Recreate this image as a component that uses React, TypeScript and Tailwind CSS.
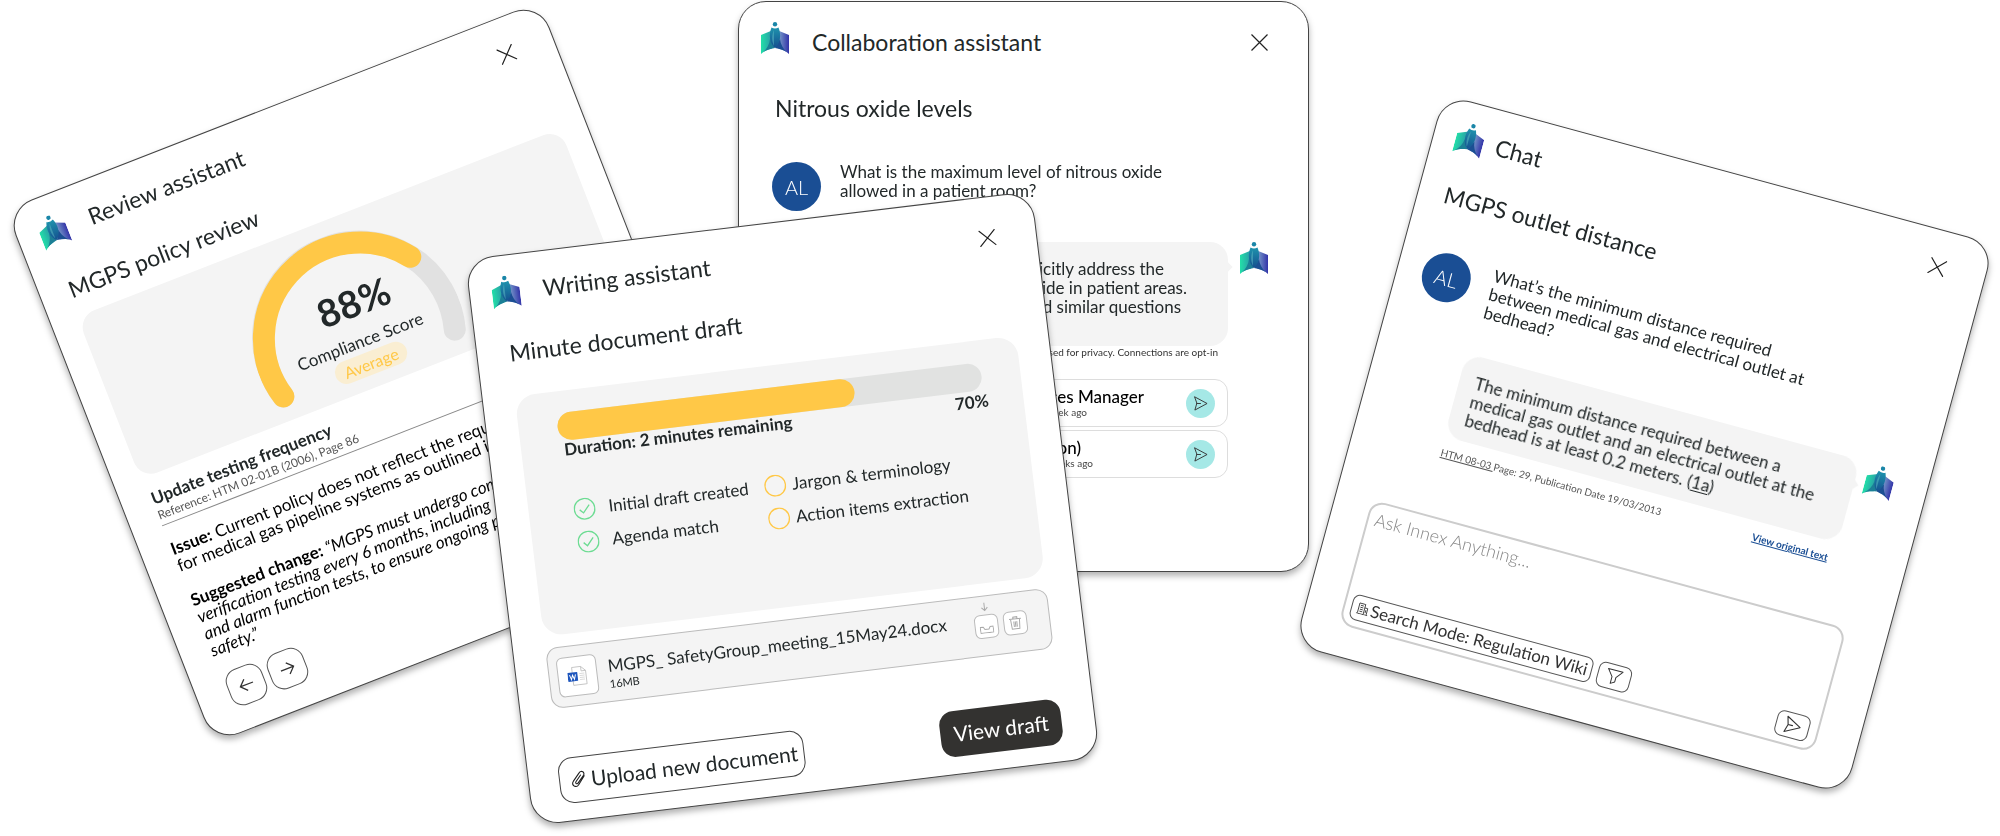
import type { ReactNode } from "react";

const steps = [
  { label: "Initial draft created", done: true },
  { label: "Jargon & terminology", done: false },
  { label: "Agenda match", done: true },
  { label: "Action items extraction", done: false },
];

const contacts = [
  {
    name: "Medical Gas Services Manager",
    seen: "Active 1 week ago",
    nameClass: "pr-[42px]",
    seenClass: "pr-[99px]",
  },
  {
    name: "Estates Lead (London)",
    seen: "Active 2 weeks ago",
    nameClass: "pr-[105px]",
    seenClass: "pr-[93px]",
  },
];

function Logo() {
  return (
    <svg viewBox="0 0 28 32" className="h-8 w-7 shrink-0" aria-hidden="true">
      <defs>
        <linearGradient id="wingLeft" x1="0" y1="0" x2="1" y2="0">
          <stop offset="0" stopColor="#22e0a8" />
          <stop offset="1" stopColor="#2a9aa6" />
        </linearGradient>
        <linearGradient id="wingRight" x1="0" y1="0" x2="1" y2="0">
          <stop offset="0" stopColor="#7da3cc" />
          <stop offset="1" stopColor="#3233a8" />
        </linearGradient>
        <linearGradient id="body" x1="0" y1="0" x2="0" y2="1">
          <stop offset="0" stopColor="#1f93ad" />
          <stop offset="1" stopColor="#14508f" />
        </linearGradient>
      </defs>
      <path d="M0 13L11 8.500V26.500C7 27.500 3 29 0 32Z" fill="url(#wingLeft)" />
      <path d="M28 13L17 8.500V26.500C21 27.500 25 29 28 32Z" fill="url(#wingRight)" />
      <path d="M9 17C8.500 22 6 27 2 30.300C5 28 9 27 14 26Z" fill="#1c7f96" />
      <path d="M19 17C19.500 22 22 27 26 30.300C23 28 19 27 14 26Z" fill="#1b4f93" />
      <path d="M10.500 5.500Q14 7.500 17.500 5.500C20.500 13 19.500 21 14 26C8.500 21 7.500 13 10.500 5.500Z" fill="url(#body)" />
      <path d="M13 8C10.500 13 10.500 19 13 24Z" fill="#5fbcc4" opacity="0.5" />
      <circle cx="14" cy="2.200" r="2.200" fill="#1a86a8" />
    </svg>
  );
}

function SendIcon({ className }: { className: string }) {
  return (
    <svg viewBox="0 0 16 16" className={className} fill="none" stroke="#333" strokeWidth="1" strokeLinejoin="round" strokeLinecap="round" aria-hidden="true">
      <path d="M2 1L15 8L2 15L4 8ZM4 8H8" />
    </svg>
  );
}

type CardProps = {
  title: string;
  heading: string;
  place: string;
  tilt: string;
  titleClass: string;
  closeClass: string;
  headingClass: string;
  children: ReactNode;
};

function Card({ title, heading, place, tilt, titleClass, closeClass, headingClass, children }: CardProps) {
  return (
    <div className={`absolute drop-shadow-[0_4px_3px_rgba(0,0,0,0.3)] ${place}`}>
      <section className={`flex min-h-[571px] w-[571px] flex-col rounded-[28px] border border-[#444] bg-white ${tilt}`}>
        <header className="flex h-[72px] shrink-0 items-center pr-10 pl-[22px]">
          <Logo />
          <h2 className={`text-[23px] leading-7 ${titleClass}`}>{title}</h2>
          <button aria-label="Close" className={`ml-auto ${closeClass}`}>
            <svg viewBox="0 0 17 17" className="size-[17px]" stroke="#222" strokeWidth="1.2">
              <path d="M0.500 0.500L16.500 16.500M16.500 0.500L0.500 16.500" />
            </svg>
          </button>
        </header>
        <h3 className={`text-[23px] leading-7 ${headingClass}`}>{heading}</h3>
        {children}
      </section>
    </div>
  );
}

function Avatar() {
  return (
    <div className="flex size-[49px] shrink-0 items-center justify-center rounded-full bg-[#1a4e94] text-xl font-light text-white">
      AL
    </div>
  );
}

function Bubble({ className, children }: { className: string; children: ReactNode }) {
  return (
    <div className={`relative rounded-[18px] bg-[#f4f4f4] ${className}`}>
      {children}
      <span className="absolute top-[21px] -right-[3px] size-2 rotate-45 bg-[#f4f4f4]" />
    </div>
  );
}

function ReviewCard() {
  return (
    <Card
      title="Review assistant"
      heading="MGPS policy review"
      place="left-[4.5%] top-[86px]"
      tilt="min-w-[573px] min-h-[573px] -rotate-[21.3deg]"
      titleClass="ml-6"
      closeClass="mt-0"
      headingClass="mt-[11px] ml-[29px]"
    >
      <div className="mt-[14px] mr-[26px] ml-[27px] flex h-[174px] justify-center rounded-[18px] bg-[#f4f4f4] pt-[15px] pr-[9px]">
        <div className="relative flex h-[149px] w-[214px] flex-col items-center pt-[52px]">
          <svg viewBox="-107 -107 214 149" className="absolute inset-0" fill="none" strokeWidth="22" strokeLinecap="round" aria-hidden="true">
            <path d="M-92 27A96 96 0 1 1 92 27" stroke="#e1e1e1" />
            <path d="M-92 27A96 96 0 0 1 77 -57" stroke="#ffc847" />
          </svg>
          <strong className="relative ml-4 text-[38px] leading-[38px] font-bold">88%</strong>
          <span className="relative mt-[9px] text-[17px] leading-6 whitespace-nowrap">Compliance Score</span>
          <span className="relative ml-[5px] rounded-full bg-[#faeed2] px-[10px] text-base leading-[23px] text-[#ffc847]">Average</span>
        </div>
      </div>
      <div className="mx-[30px] mt-[13px] border-b border-[#888] pb-[2px]">
        <h4 className="text-[17px] leading-5 font-bold">Update testing frequency</h4>
        <p className="text-[12px] leading-4 text-[#555]">Reference: HTM 02-01B (2006), Page 86</p>
      </div>
      <div className="mx-[30px] mt-4 text-[17px] leading-[18px] whitespace-nowrap text-black">
        <p>
          <b>Issue:</b> Current policy does not reflect the requirements
          <br />
          for medical gas pipeline systems as outlined in HTM.
        </p>
        <p className="mt-[19px] italic">
          <b className="not-italic">Suggested change:</b> “MGPS must undergo complete
          <br />
          verification testing every 6 months, including pressure
          <br />
          and alarm function tests, to ensure ongoing patient
          <br />
          safety.”
        </p>
      </div>
      <div className="mt-4 ml-8 flex gap-[6px]">
        <button aria-label="Previous" className="flex size-[38px] items-center justify-center rounded-[13px] border border-[#555]">
          <svg viewBox="0 0 16 16" className="size-4" fill="none" stroke="#333" strokeWidth="1.300">
            <path d="M15 8H2M7.500 2L1.500 8L7.500 14" />
          </svg>
        </button>
        <button aria-label="Next" className="flex size-[38px] items-center justify-center rounded-[13px] border border-[#555]">
          <svg viewBox="0 0 16 16" className="size-4" fill="none" stroke="#333" strokeWidth="1.300">
            <path d="M1 8H14M8.500 2L14.500 8L8.500 14" />
          </svg>
        </button>
      </div>
    </Card>
  );
}

function CollaborationCard() {
  return (
    <Card
      title="Collaboration assistant"
      heading="Nitrous oxide levels"
      place="left-[36.9%] top-px"
      tilt="rotate-0"
      titleClass="ml-[23px] pt-2"
      closeClass="mt-2"
      headingClass="mt-5 ml-9"
    >
      <div className="mt-10 ml-[33px] flex gap-[19px]">
        <Avatar />
        <p className="text-[17px] leading-[19px]">
          What is the maximum level of nitrous oxide
          <br />
          allowed in a patient room?
        </p>
      </div>
      <div className="mt-[31px] mr-10 ml-[88px] flex gap-3">
        <Bubble className="h-[104px] flex-1 pt-[17px]">
          <p className="text-right text-[17px] leading-[19px]">
            <span className="block pr-16">HTM 03-01 does not explicitly address the</span>
            <span className="block pr-[41px]">maximum level of nitrous oxide in patient areas.</span>
            <span className="block pr-[47px]">Other hospitals had similar questions</span>
          </p>
        </Bubble>
        <Logo />
      </div>
      <p className="mr-[90px] text-right text-[10px] leading-3 text-[#333]">
        Names are anonymised for privacy. Connections are opt-in
      </p>
      <ul className="mt-[21px] mr-20 ml-[88px] flex flex-col gap-[3px]">
        {contacts.map((c) => (
          <li key={c.name} className="flex h-12 items-center rounded-[13px] border border-[#ddd] pr-3">
            <div className="flex flex-1 flex-col items-end">
              <span className={`text-[17px] leading-[18px] font-medium text-black ${c.nameClass}`}>{c.name}</span>
              <span className={`text-[10px] leading-3 text-[#444] ${c.seenClass}`}>{c.seen}</span>
            </div>
            <button aria-label={`Message ${c.name}`} className="flex size-[29px] items-center justify-center rounded-full bg-[#a5e8e6]">
              <SendIcon className="size-[15px]" />
            </button>
          </li>
        ))}
      </ul>
    </Card>
  );
}

function WritingCard() {
  return (
    <Card
      title="Writing assistant"
      heading="Minute document draft"
      place="left-[24.85%] top-[223px]"
      tilt="-rotate-[6.9deg]"
      titleClass="ml-[23px]"
      closeClass="mt-2"
      headingClass="mt-[11px] ml-8"
    >
      <div className="mx-8 mt-[30px] h-[242px] rounded-[20px] bg-[#f4f4f4] px-[39px] pt-[22px]">
        <div className="h-7 rounded-full bg-[#e1e2e1]">
          <div className="h-full w-[70%] rounded-full bg-[#ffc847]" />
        </div>
        <div className="-mr-1 flex justify-between pl-1 text-[17px] font-bold">
          <span className="leading-[18px]">Duration: 2 minutes remaining</span>
          <span className="leading-[22px]">70%</span>
        </div>
        <ul className="mt-[31px] ml-[6px] grid grid-cols-[192px_auto] text-[17px] leading-[33px] whitespace-nowrap">
          {steps.map((s) => (
            <li key={s.label} className={s.done ? "flex items-center gap-[13px]" : "flex items-center gap-[6px]"}>
              <svg viewBox="0 0 22 22" className="size-[22px]" fill="none" stroke={s.done ? "#6ddc93" : "#ffc847"} strokeWidth="1.300">
                <circle cx="11" cy="11" r="10.300" />
                {s.done && <path d="M6 11.500L9.500 15L16 7.500" />}
              </svg>
              {s.label}
            </li>
          ))}
        </ul>
      </div>
      <div className="mx-8 mt-3 flex h-[61px] items-center rounded-[12px] border border-[#bbb] bg-[#f4f4f4] pr-[22px] pl-2">
        <div className="flex size-10 items-center justify-center rounded-[6px] border border-[#bbb] bg-white">
          <svg viewBox="0 0 20 20" className="size-5" aria-hidden="true">
            <path d="M5 1H14L18.500 5.500V19H5ZM14 1V5.500H18.500" fill="#fff" stroke="#bbb" strokeWidth="0.800" />
            <path d="M12 8H17M12 10H17M12 12H17M12 14H17" stroke="#ccc" strokeWidth="0.700" />
            <rect x="0" y="6" width="10" height="9" rx="0.500" fill="#1e56bd" />
            <path d="M2 8.300L3.500 13L5 8.800L6.500 13L8 8.300" fill="none" stroke="#fff" strokeWidth="1" />
          </svg>
        </div>
        <div className="ml-[11px] flex flex-col whitespace-nowrap">
          <span className="text-[17px] leading-6">MGPS_ SafetyGroup_meeting_15May24.docx</span>
          <span className="text-[11px] leading-3">16MB</span>
        </div>
        <div className="ml-auto flex gap-[5px]">
          <button aria-label="Download" className="relative flex size-6 items-end justify-center rounded-[6px] border border-[#bbb] bg-white pb-1">
            <svg viewBox="0 0 8 9" className="absolute -top-[13px] left-[7px] h-[9px] w-2" fill="none" stroke="#aaa" strokeWidth="1">
              <path d="M4 0V8M1 5L4 8L7 5" />
            </svg>
            <svg viewBox="0 0 14 8" className="h-2 w-[14px]" fill="none" stroke="#aaa" strokeWidth="1">
              <path d="M0.500 1.500H3.500L5 4H9L10.500 1.500H13.500V7.500H0.500Z" />
            </svg>
          </button>
          <button aria-label="Delete" className="flex size-6 items-center justify-center rounded-[6px] border border-[#bbb] bg-white">
            <svg viewBox="0 0 14 14" className="size-[14px]" fill="none" stroke="#aaa" strokeWidth="1">
              <path d="M1 3H13M5 3V1H9V3M2.500 3L3.200 13H10.800L11.500 3M5.500 5.500V11M7 5.500V11M8.500 5.500V11" />
            </svg>
          </button>
        </div>
      </div>
      <div className="mt-[50px] mr-[33px] ml-[30px] flex justify-between">
        <button className="flex h-[46px] items-center gap-1 rounded-[14px] border border-[#444] pr-[6px] pl-[11px] text-[21px]">
          <svg viewBox="0 0 16 18" className="h-[18px] w-4" fill="none" stroke="#222" strokeWidth="1.100" strokeLinecap="round">
            <path d="M13.500 6L7 14.200C5.800 15.700 3.800 16 2.400 14.900C1 13.700 0.900 11.700 2 10.300L9 2.300C9.900 1.200 11.500 1 12.600 1.900C13.700 2.800 13.800 4.300 12.900 5.400L6.500 12.600C6 13.200 5.200 13.300 4.700 12.800C4.100 12.300 4.100 11.500 4.600 10.900L10 4.800" />
          </svg>
          Upload new document
        </button>
        <button className="h-[46px] rounded-[14px] bg-[#333230] px-[13px] text-[21px] text-white">View draft</button>
      </div>
    </Card>
  );
}

function ChatCard() {
  return (
    <Card
      title="Chat"
      heading="MGPS outlet distance"
      place="left-[67.95%] top-[159px]"
      tilt="rotate-[15.2deg]"
      titleClass="ml-[13px]"
      closeClass="mt-0"
      headingClass="mt-[9px] ml-[26px]"
    >
      <div className="mt-[42px] ml-[25px] flex gap-[21px]">
        <Avatar />
        <p className="text-[17px] leading-[19px]">
          What’s the minimum distance required
          <br />
          between medical gas and electrical outlet at
          <br />
          bedhead?
        </p>
      </div>
      <div className="mt-[35px] mr-[34px] ml-[89px] flex gap-[10px]">
        <Bubble className="h-[86px] flex-1 pt-[17px] pl-4">
          <p className="text-[17px] leading-[19px] whitespace-nowrap">
            The minimum distance required between a
            <br />
            medical gas outlet and an electrical outlet at the
            <br />
            bedhead is at least 0.2 meters. (
            <a href="#source" className="underline underline-offset-2">1a</a>)
          </p>
        </Bubble>
        <Logo />
      </div>
      <div className="mt-2 mr-[78px] ml-[90px] flex justify-between text-[10px] leading-4 text-[#555]">
        <span>
          <a href="#htm" className="underline">HTM 08-03 </a>
          Page: 29, Publication Date 19/03/2013
        </span>
        <a href="#original" className="font-bold text-[#1a4e94] underline">View original text</a>
      </div>
      <div className="mt-[56px] mr-[41px] ml-9 flex h-[129px] flex-col rounded-[14px] border-2 border-[#ccc] pr-2 pb-[6px] pl-[6px]">
        <textarea
          aria-label="Ask Innex Anything"
          placeholder="Ask Innex Anything..."
          className="w-full flex-1 resize-none pt-1 text-[18px] leading-6 outline-none placeholder:font-light placeholder:text-[#888]"
        />
        <div className="flex items-center text-[#333]">
          <button className="flex h-[26px] items-center gap-[2px] rounded-[7px] border border-[#555] pr-[4px] pl-[5px] text-[17px] leading-6 whitespace-nowrap">
            <svg viewBox="0 0 12 12" className="size-3" fill="none" stroke="#444" strokeWidth="0.900" aria-hidden="true">
              <path d="M1.500 11V1H7.500V11M7.500 4.500H10.500V11M0 11.500H12M3 3H6M3 5H6M3 7H6M3 9H6M9 6.500V9.500" />
            </svg>
            Search Mode: Regulation Wiki
          </button>
          <button aria-label="Filter" className="ml-[6px] flex h-[26px] w-[34px] items-center justify-center rounded-[7px] border border-[#555]">
            <svg viewBox="0 0 18 18" className="size-[18px]" fill="none" stroke="#333" strokeWidth="1" strokeLinejoin="round">
              <path d="M1.500 2H16.500L11 9V13.500L7 16V9Z" />
            </svg>
          </button>
          <button aria-label="Send" className="ml-auto flex h-[26px] w-[34px] items-center justify-center rounded-[7px] border border-[#555]">
            <SendIcon className="size-[18px]" />
          </button>
        </div>
      </div>
    </Card>
  );
}

export default function App() {
  return (
    <main className="relative min-h-screen overflow-hidden bg-white font-[Lato,'Open_Sans',sans-serif] text-[#222829]">
      <ReviewCard />
      <CollaborationCard />
      <WritingCard />
      <ChatCard />
    </main>
  );
}
